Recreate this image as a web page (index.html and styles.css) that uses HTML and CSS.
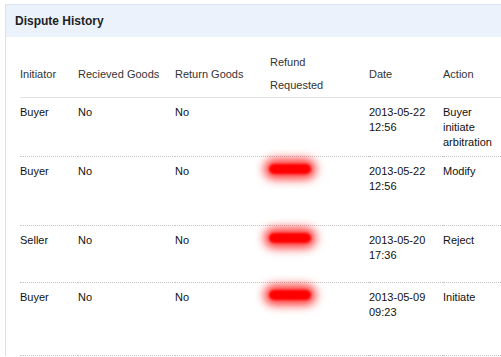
FILE: index.html
```html
<!DOCTYPE html>
<html lang="en">
<head>
    <meta charset="UTF-8">
    <title>Dispute History</title>
    <link rel="stylesheet" href="styles.css">
</head>
<body>
<div class="panel">
    <div class="panel-head">Dispute History</div>
    <div class="panel-body">
        <table class="history">
            <thead>
                <tr>
                    <th class="col-init">Initiator</th>
                    <th class="col-recv">Recieved Goods</th>
                    <th class="col-ret">Return Goods</th>
                    <th class="col-refund">Refund<br>Requested</th>
                    <th class="col-date">Date</th>
                    <th class="col-action">Action</th>
                </tr>
            </thead>
            <tbody>
                <tr class="row-1">
                    <td>Buyer</td>
                    <td>No</td>
                    <td>No</td>
                    <td></td>
                    <td>2013-05-22 12:56</td>
                    <td>Buyer initiate arbitration</td>
                </tr>
                <tr class="row-2">
                    <td>Buyer</td>
                    <td>No</td>
                    <td>No</td>
                    <td><span class="hidden-amount"></span></td>
                    <td>2013-05-22 12:56</td>
                    <td>Modify</td>
                </tr>
                <tr class="row-3">
                    <td>Seller</td>
                    <td>No</td>
                    <td>No</td>
                    <td><span class="hidden-amount"></span></td>
                    <td>2013-05-20 17:36</td>
                    <td>Reject</td>
                </tr>
                <tr class="row-4">
                    <td>Buyer</td>
                    <td>No</td>
                    <td>No</td>
                    <td><span class="hidden-amount"></span></td>
                    <td>2013-05-09 09:23</td>
                    <td>Initiate</td>
                </tr>
            </tbody>
        </table>
    </div>
</div>
</body>
</html>
```

FILE: styles.css
```css
html{
    overflow:hidden;
}
body{
    margin:0px;
    padding:4px 0px 0px 5px;
    background-color:#ffffff;
    font-family:"Liberation Sans", Arial, sans-serif;
    font-size:11px;
    color:#111111;
}
.panel{
    border-top:1px solid #dbe5f3;
    border-left:1px solid #d6e2f3;
}
.panel-head{
    height:32px;
    line-height:32px;
    padding-left:9px;
    background-color:#ebf2fc;
    font-size:12px;
    font-weight:bold;
    color:#222222;
}
.panel-body{
    padding:13px 0px 0px 14px;
}
.history{
    border-collapse:collapse;
    table-layout:fixed;
    width:100%;
}
.history th{
    font-weight:normal;
    text-align:left;
    color:#333333;
    line-height:23px;
    padding:1px 0px 0px 0px;
    vertical-align:middle;
    border-bottom:1px solid #e2e2e2;
}
.col-init{ width:58px; }
.col-recv{ width:97px; }
.col-ret{ width:95px; }
.col-refund{ width:99px; }
.col-date{ width:74px; }

.history td{
    vertical-align:top;
    line-height:15px;
    padding:7px 0px 0px 0px;
    border-bottom:1px dotted #c4c4c4;
}
.row-1 td{ height:51px; }
.row-2 td{ height:61px; }
.row-3 td{ height:49px; }
.row-4 td{ height:65px; }

/* amounts are blanked out with a red smudge */
.hidden-amount{
    display:block;
    width:42px;
    height:10px;
    margin:0px 0px 0px -1px;
    background-color:#ff0000;
    border-radius:6px;
    box-shadow:0px 0px 10px 5px rgba(255,0,0,0.8);
    filter:blur(1px);
}
```
